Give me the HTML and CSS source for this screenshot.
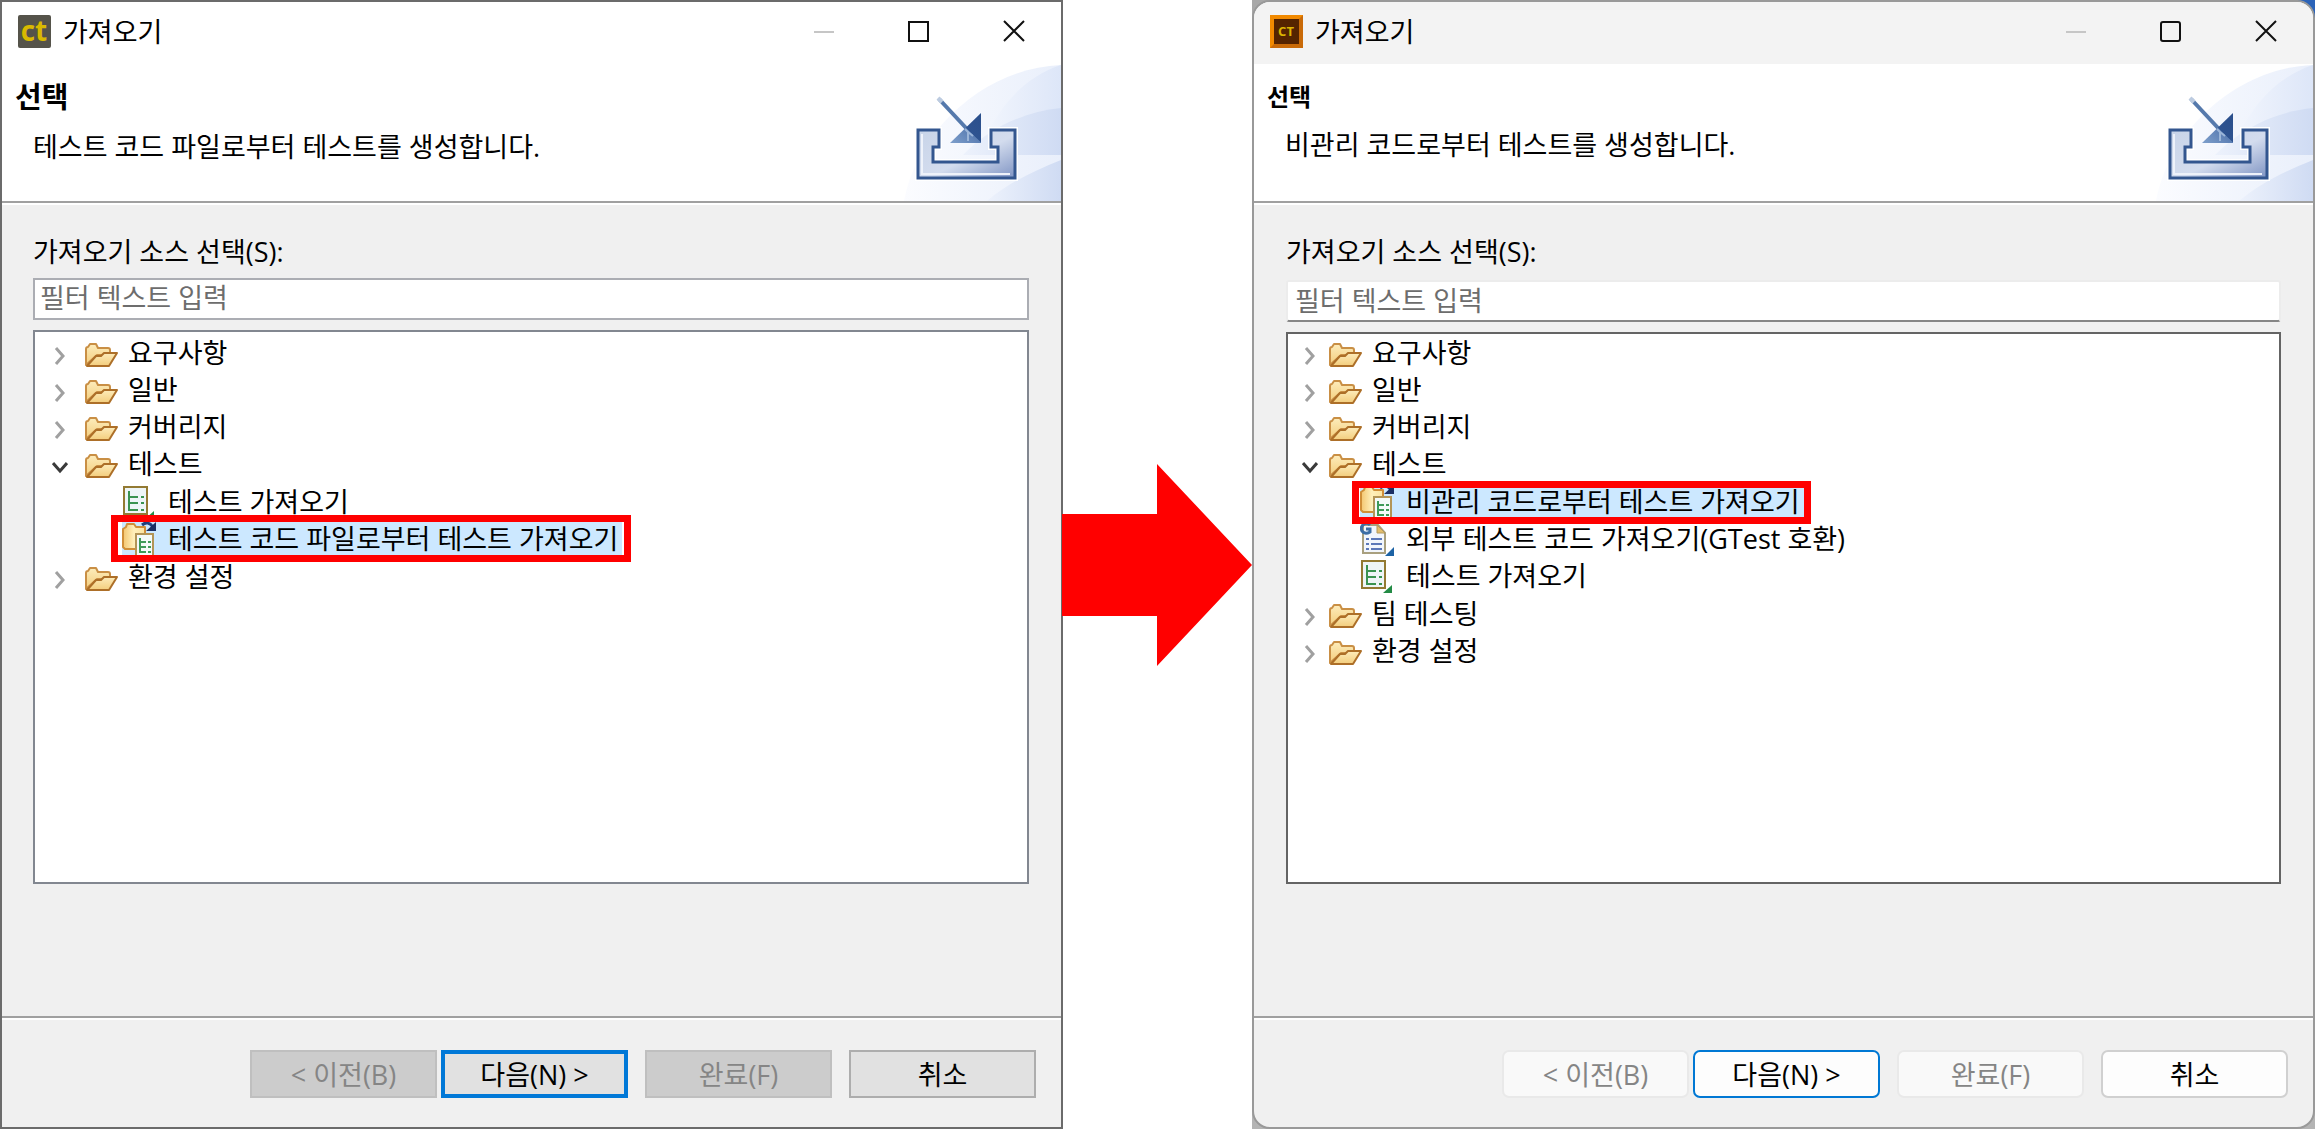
FILE: index.html
```html
<!DOCTYPE html>
<html lang="ko">
<head>
<meta charset="utf-8">
<title>가져오기</title>
<link rel="stylesheet" href="styles.css">
</head>
<body>
<svg class="defs" aria-hidden="true">
  <defs>
    <linearGradient id="g-folder" x1="0" y1="0" x2="0" y2="1"><stop offset="0" stop-color="#fdecbb"/><stop offset="1" stop-color="#f3cd7c"/></linearGradient>
    <linearGradient id="g-side" x1="0" y1="0" x2="1" y2="0"><stop offset="0" stop-color="#f3c670"/><stop offset=".5" stop-color="#fff0bb"/><stop offset="1" stop-color="#fbe3a0"/></linearGradient>
    <linearGradient id="g-arc" x1="0" y1="0" x2="1" y2="0"><stop offset="0" stop-color="#fbfcff"/><stop offset="1" stop-color="#e9effb"/></linearGradient>
    <linearGradient id="g-arc2" x1="0" y1="0" x2="1" y2="0"><stop offset="0" stop-color="#f1f5fd"/><stop offset="1" stop-color="#dde6f8"/></linearGradient>
    <linearGradient id="g-arc3" x1="0" y1="0" x2="1" y2="0"><stop offset="0" stop-color="#edf2fc"/><stop offset="1" stop-color="#cfdbf3"/></linearGradient>
    <linearGradient id="g-tray" x1="0" y1="0" x2="1" y2="1"><stop offset="0" stop-color="#c8d4e8"/><stop offset=".55" stop-color="#d3dcee"/><stop offset="1" stop-color="#7f94c3"/></linearGradient>
    <linearGradient id="g-head" x1="0" y1="1" x2="1" y2="0"><stop offset="0" stop-color="#7fa0cc"/><stop offset=".5" stop-color="#5c7fb4"/><stop offset=".52" stop-color="#2e5390"/><stop offset="1" stop-color="#2a4f8c"/></linearGradient>
  </defs>
  <symbol id="closed" viewBox="0 0 16 37"><path d="M4 14l7 8-7 8" fill="none" stroke="#a0a0a0" stroke-width="3"/></symbol>
  <symbol id="open" viewBox="0 0 16 37"><path d="M1 18l7 8 7-8" fill="none" stroke="#3a3a3a" stroke-width="3"/></symbol>
  <symbol id="folder" viewBox="0 0 34 37">
    <path d="M2 31V15q0-2 2-2l2-3h6l2 4h10q2 0 2 2v5H13z" fill="url(#g-folder)" stroke="#c98f45" stroke-width="2" stroke-linejoin="round"/>
    <path d="M3 32l9-10h5l3-3h13l-8 13z" fill="url(#g-folder)" stroke="#ad6f28" stroke-width="2" stroke-linejoin="round"/>
  </symbol>
  <symbol id="test" viewBox="0 0 34 37">
    <rect x="2" y="4" width="23" height="27" fill="#eef5f7" stroke="#937a33" stroke-width="2"/>
    <path d="M7 8v19h9M7 14h9M7 20h9" fill="none" stroke="#3a9350" stroke-width="2"/>
    <path d="M19 14h3M19 20h3M19 27h3" stroke="#3a9350" stroke-width="2"/>
    <path d="M32 28v8h-9z" fill="#238b45"/>
  </symbol>
  <symbol id="import" viewBox="0 0 34 37">
    <path d="M1 27V9l3-2 1-3h7l2 3h9v22H3z" fill="url(#g-side)" stroke="#d08f38" stroke-width="2" stroke-linejoin="round"/>
    <rect x="14" y="14" width="17" height="22" fill="#f4faf8" stroke="#b39557" stroke-width="2"/>
    <path d="M18 18v14h6M18 22h6M18 27h6M26 22h3M26 27h3M26 32h3" fill="none" stroke="#3f9a58" stroke-width="2"/>
    <path d="M20 5q6-5 11 2" fill="none" stroke="#1f3f7a" stroke-width="3"/>
    <path d="M34 2v9h-10z" fill="#1b2f63"/>
  </symbol>
  <symbol id="gtest" viewBox="0 0 34 37">
    <path d="M3 5h15l7 8v20H3z" fill="#f2f6fc" stroke="#a9a07f" stroke-width="2"/>
    <path d="M17 5l8 8h-8z" fill="#e3bd6c" stroke="#b49a5c" stroke-width="1"/>
    <path d="M6 19h3M11 19h11M6 24h3M11 24h11M6 29h3M11 29h11" stroke="#5c78b8" stroke-width="2"/>
    <path d="M10 5q-3-3-6-1-4 3-2 7 3 4 8 1V9H6" fill="none" stroke="#3c6ea5" stroke-width="3"/>
    <path d="M34 27v9h-9z" fill="#1d63a5"/>
  </symbol>
  <symbol id="tray" viewBox="0 0 158 137">
    <path d="M1 137C14 66 82 4 158 1V137z" fill="url(#g-arc)"/>
    <path d="M84 70C100 38 124 12 158 1V91H90z" fill="url(#g-arc2)"/>
    <path d="M60 91C84 66 118 48 158 44V91z" fill="url(#g-arc3)"/>
    <path d="M84 137C104 120 128 108 158 96V137z" fill="url(#g-arc3)"/>
    <path d="M15 66H36V83H30V98H95V83H88V66H112V114H15z" fill="url(#g-tray)" stroke="#fff" stroke-width="6"/>
    <path d="M15 66H36V83H30V98H95V83H88V66H112V114H15z" fill="url(#g-tray)" stroke="#33568f" stroke-width="3"/>
    <path d="M19 70V110H107" fill="none" stroke="#eef2fa" stroke-width="2"/>
    <path d="M36 35l28 30" stroke="#5579ac" stroke-width="4"/>
    <path d="M35 34l4 4" stroke="#bccbe0" stroke-width="4"/>
    <path d="M78 49V79H47z" fill="url(#g-head)"/>
    <path d="M62 65l3 3v9M65 68l5 4" stroke="#9bb5d8" stroke-width="2" fill="none"/>
  </symbol>
  <symbol id="min" viewBox="0 0 24 24"><path d="M2 13h20" stroke="#c6c6c6" stroke-width="2"/></symbol>
  <symbol id="close" viewBox="0 0 24 24"><path d="M2 2l20 20M22 2L2 22" stroke="#111" stroke-width="2"/></symbol>
</svg>

<main class="compare">
  <section class="window classic" aria-label="이전 가져오기 창">
    <header class="titlebar">
      <svg class="logo" viewBox="0 0 33 33" aria-hidden="true"><rect width="33" height="33" rx="2" fill="#55534a"/><text x="16" y="26" text-anchor="middle" class="logo-ct">ct</text></svg>
      <span class="title">가져오기</span>
      <button class="ctl" aria-label="최소화" disabled><svg><use href="#min"/></svg></button>
      <button class="ctl" aria-label="최대화"><svg viewBox="0 0 24 24"><rect x="2" y="3" width="19" height="19" fill="none" stroke="#111" stroke-width="2"/></svg></button>
      <button class="ctl" aria-label="닫기"><svg><use href="#close"/></svg></button>
    </header>
    <div class="banner">
      <div class="banner-text">
        <h1>선택</h1>
        <p>테스트 코드 파일로부터 테스트를 생성합니다.</p>
      </div>
      <svg class="art" aria-hidden="true"><use href="#tray"/></svg>
    </div>
    <div class="content">
      <label for="filter-a">가져오기 소스 선택(S):</label>
      <input id="filter-a" class="filter" type="text" placeholder="필터 텍스트 입력">
      <ul class="tree">
        <li><div class="row"><svg class="tw"><use href="#closed"/></svg><svg class="ic"><use href="#folder"/></svg><span>요구사항</span></div></li>
        <li><div class="row"><svg class="tw"><use href="#closed"/></svg><svg class="ic"><use href="#folder"/></svg><span>일반</span></div></li>
        <li><div class="row"><svg class="tw"><use href="#closed"/></svg><svg class="ic"><use href="#folder"/></svg><span>커버리지</span></div></li>
        <li><div class="row"><svg class="tw"><use href="#open"/></svg><svg class="ic"><use href="#folder"/></svg><span>테스트</span></div>
          <ul class="children">
            <li><div class="leaf"><svg class="ic"><use href="#test"/></svg><span>테스트 가져오기</span></div></li>
            <li><div class="leaf selected"><svg class="ic"><use href="#import"/></svg><span>테스트 코드 파일로부터 테스트 가져오기</span></div></li>
          </ul>
        </li>
        <li><div class="row"><svg class="tw"><use href="#closed"/></svg><svg class="ic"><use href="#folder"/></svg><span>환경 설정</span></div></li>
      </ul>
    </div>
    <footer class="actions">
      <button class="btn" disabled>&lt; 이전(B)</button>
      <button class="btn primary">다음(N) &gt;</button>
      <button class="btn" disabled>완료(F)</button>
      <button class="btn">취소</button>
    </footer>
  </section>

  <svg class="arrow" viewBox="0 0 190 202" role="img" aria-label="변경"><path d="M0 50H95V0L190 101L95 202V152H0z" fill="#f00"/></svg>

  <div class="backdrop">
  <section class="window modern" aria-label="새 가져오기 창">
    <header class="titlebar">
      <svg class="logo" viewBox="0 0 33 33" aria-hidden="true"><rect width="33" height="33" fill="#f28a00"/><path d="M33 0v33H0l4-4h25V4z" fill="#c96a08"/><rect x="4" y="4" width="25" height="25" fill="#552400"/><text x="16" y="21" text-anchor="middle" class="logo-sm">CT</text></svg>
      <span class="title">가져오기</span>
      <button class="ctl" aria-label="최소화" disabled><svg><use href="#min"/></svg></button>
      <button class="ctl" aria-label="최대화"><svg viewBox="0 0 24 24"><rect x="2" y="3" width="19" height="19" rx="2" fill="none" stroke="#111" stroke-width="2"/></svg></button>
      <button class="ctl" aria-label="닫기"><svg><use href="#close"/></svg></button>
    </header>
    <div class="banner">
      <div class="banner-text">
        <h1>선택</h1>
        <p>비관리 코드로부터 테스트를 생성합니다.</p>
      </div>
      <svg class="art" aria-hidden="true"><use href="#tray"/></svg>
    </div>
    <div class="content">
      <label for="filter-b">가져오기 소스 선택(S):</label>
      <input id="filter-b" class="filter" type="text" placeholder="필터 텍스트 입력">
      <ul class="tree">
        <li><div class="row"><svg class="tw"><use href="#closed"/></svg><svg class="ic"><use href="#folder"/></svg><span>요구사항</span></div></li>
        <li><div class="row"><svg class="tw"><use href="#closed"/></svg><svg class="ic"><use href="#folder"/></svg><span>일반</span></div></li>
        <li><div class="row"><svg class="tw"><use href="#closed"/></svg><svg class="ic"><use href="#folder"/></svg><span>커버리지</span></div></li>
        <li><div class="row"><svg class="tw"><use href="#open"/></svg><svg class="ic"><use href="#folder"/></svg><span>테스트</span></div>
          <ul class="children">
            <li><div class="leaf selected"><svg class="ic"><use href="#import"/></svg><span>비관리 코드로부터 테스트 가져오기</span></div></li>
            <li><div class="leaf"><svg class="ic"><use href="#gtest"/></svg><span>외부 테스트 코드 가져오기(GTest 호환)</span></div></li>
            <li><div class="leaf"><svg class="ic"><use href="#test"/></svg><span>테스트 가져오기</span></div></li>
          </ul>
        </li>
        <li><div class="row"><svg class="tw"><use href="#closed"/></svg><svg class="ic"><use href="#folder"/></svg><span>팀 테스팅</span></div></li>
        <li><div class="row"><svg class="tw"><use href="#closed"/></svg><svg class="ic"><use href="#folder"/></svg><span>환경 설정</span></div></li>
      </ul>
    </div>
    <footer class="actions">
      <button class="btn" disabled>&lt; 이전(B)</button>
      <button class="btn primary">다음(N) &gt;</button>
      <button class="btn" disabled>완료(F)</button>
      <button class="btn">취소</button>
    </footer>
  </section>
  </div>
</main>
</body>
</html>
```
FILE: styles.css
```css
* { box-sizing: border-box; }

body {
  margin: 0;
  background: #fff;
  color: #000;
  font: 27px/37px "Open Sans", "Noto Sans CJK KR", sans-serif;
}

.defs { position: absolute; width: 0; height: 0; }
ul, h1, p { margin: 0; padding: 0; }
ul { list-style: none; }
button, input { font: inherit; color: inherit; }
svg { display: block; flex: none; }

.compare {
  display: grid;
  grid-template-columns: 1fr 189px 1fr;
  min-height: 100vh;
}

.arrow {
  width: 190px;
  height: 202px;
  align-self: center;
  justify-self: end;
}

/* Windows */
.window {
  display: flex;
  flex-direction: column;
  border: 2px solid #6b6b6b;
  background: #f0f0f0;
  overflow: hidden;
}
.backdrop {
  display: flex;
  background: linear-gradient(90deg, #a8a8a8 0 96%, #2b63b8 96%) top / 100% 20px no-repeat #b4b4b4;
}
.modern {
  flex: 1;
  border-color: #999;
  border-radius: 18px;
}

.titlebar {
  display: flex;
  align-items: center;
  height: 62px;
  padding: 0 0 4px 16px;
  background: #fff;
}
.modern .titlebar { background: #f3f3f3; }
.logo { width: 33px; height: 33px; overflow: visible; }
.logo-ct { font: bold 28px/28px "Open Sans", sans-serif; fill: #d9b900; }
.logo-sm { font: bold 13px/13px "Open Sans", sans-serif; fill: #dcb400; }
.title { flex: 1; padding-left: 12px; }
.ctl {
  display: flex;
  align-items: center;
  justify-content: center;
  width: 95px;
  height: 58px;
  padding: 0;
  border: 0;
  background: none;
}
.ctl svg { width: 24px; height: 24px; }

.banner {
  display: flex;
  justify-content: space-between;
  background: #fff;
  border-bottom: 2px solid #a0a0a0;
}
.banner-text { padding: 15px 0 0 13px; }
.banner h1 { font-size: 29px; line-height: 36px; }
.banner p { padding: 12px 0 0 18px; line-height: 40px; }
.modern h1 { font-size: 24px; }
.modern .banner p { padding-top: 10px; }
.art { width: 158px; height: 137px; }

.content {
  display: flex;
  flex-direction: column;
  flex: 1;
  padding: 27px 32px 132px 31px;
  border-top: 2px solid #fff;
}
.content label { line-height: 40px; }

.filter {
  height: 42px;
  margin: 6px 0 10px;
  padding: 0 5px 3px;
  border: 2px solid #abadb3;
  border-radius: 0;
  background: #fff;
  outline: 0;
}
.filter::placeholder { color: #6d6d6d; opacity: 1; }
.modern .content { padding-left: 32px; }
.modern .filter {
  margin-top: 8px;
  padding: 0 7px 2px;
  border-color: #ececec #ececec #868686;
  border-radius: 3px;
}

/* Source tree */
.tree {
  flex: 1;
  padding: 2px 0 0 17px;
  border: 2px solid #828790;
  background: #fff;
}
.modern .tree { padding: 0 0 0 14px; border-color: #646464; }
.row { display: flex; gap: 16px; height: 37px; }
.row span { margin-left: -6px; }
.modern .row { gap: 10px; }
.modern .row span { margin-left: 0; }
.tw { width: 16px; height: 37px; }
.ic { width: 34px; height: 37px; }

.children { padding: 1px 0 1px 70px; }
.modern .children { padding-left: 58px; }
.leaf {
  display: flex;
  gap: 12px;
  width: fit-content;
  height: 37px;
}
.selected {
  position: relative;
  padding-right: 4px;
  background: #cce8ff;
}
.selected::after {
  content: "";
  position: absolute;
  inset: -5px -9px -5px -11px;
  border: 7px solid #f00;
}
.modern .selected::after { inset: -2px -7px -4px -8px; }

/* Wizard buttons */
.actions {
  display: flex;
  justify-content: flex-end;
  gap: 17px;
  height: 111px;
  padding: 32px 25px 0 0;
  border-top: 2px solid #a0a0a0;
  box-shadow: inset 0 2px #fff;
}
.btn {
  width: 187px;
  height: 48px;
  padding: 0;
  border: 2px solid #adadad;
  background: #e1e1e1;
}
.btn:disabled {
  border-color: #bfbfbf;
  background: #ccc;
  color: #858585;
}
.btn.primary { margin-left: -13px; border: 4px solid #0078d7; }

.modern .btn {
  border-color: #d0d0d0;
  border-radius: 7px;
  background: #fdfdfd;
}
.modern .btn:disabled { border-color: #e9e9e9; background: #f9f9f9; }
.modern .btn.primary { border: 2px solid #0078d4; }
```
